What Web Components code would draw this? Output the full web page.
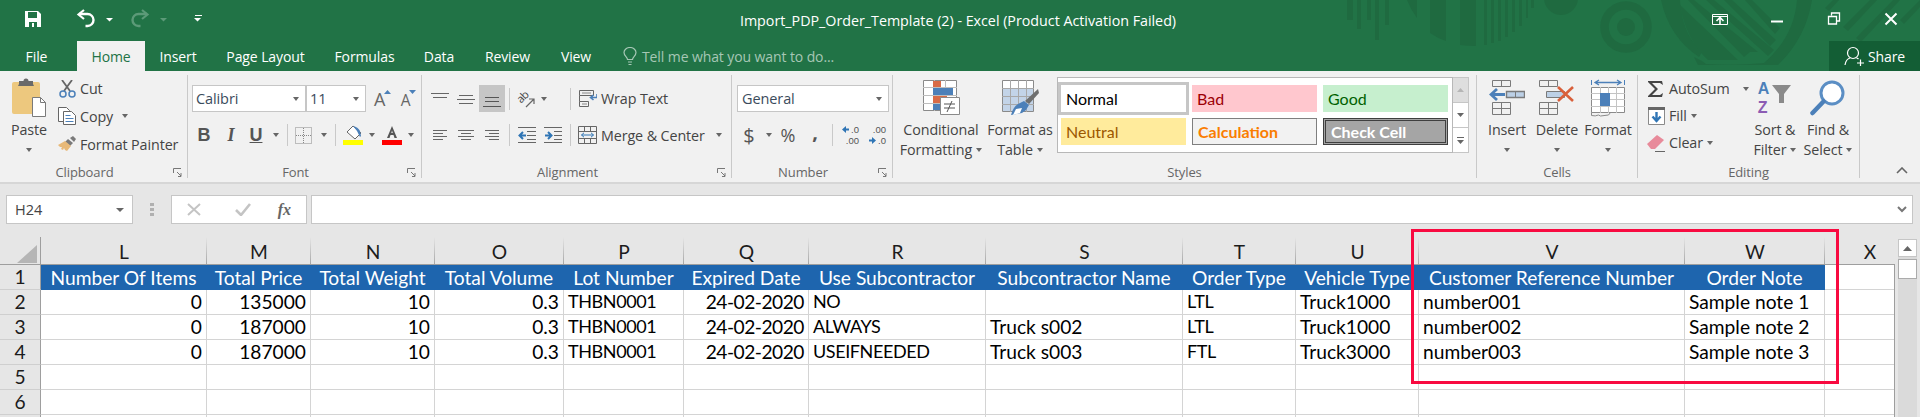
<!DOCTYPE html>
<html lang="en">
<head>
<meta charset="utf-8">
<title>Import_PDP_Order_Template (2) - Excel</title>
<style>
    html, body { margin: 0; padding: 0; height: 417px; overflow: hidden; background: #e6e6e6; }
    body { position: relative; font-family: "Open Sans", sans-serif; }
    xl-highlight { left: 1411px; top: 229px; width: 428px; height: 155px; }
</style>
</head>
<body>
<xl-titlebar></xl-titlebar>
<xl-ribbon></xl-ribbon>
<xl-formula-bar></xl-formula-bar>
<xl-sheet></xl-sheet>
<xl-highlight></xl-highlight>

<template id="xl-titlebar-template">
    <style>
        :host { display: block; position: relative; height: 71px; background: #217346; color: #fff; overflow: hidden; font-family: "Open Sans", sans-serif; }
        .art { position: absolute; left: 0; top: 0; }
        .top, .tabs { position: relative; display: flex; align-items: center; }
        .top { height: 41px; }
        .tabs { height: 30px; font-size: 14px; letter-spacing: -0.1px; }
        .tabs > div { display: flex; align-items: center; justify-content: center; height: 30px; flex: none; }
        .home { background: #f1f1f1; color: #217346; }
        .title { position: absolute; left: 0; right: 4px; top: 11px; text-align: center; font-size: 14.300px; line-height: 20px; letter-spacing: -0.02px; }
        .tell { color: #a6c7b5; }
        .share { margin-left: auto; background: #135e35; width: 91px; gap: 4px; }
        .win { position: absolute; top: 0; left: 0; }
    </style>
    <svg class="art" width="1920" height="71" fill="#1f6a40">
        <path d="M1347 0h6v20h-6zM1357 0h4v29h-4zM1367 0h4v20h-4zM1375 0h4v40h-4zM1385 0h4v25h-4z"/>
        <path d="M1407 0h10v18q-6-8-10-18zM1430 0h16v41q-9-3-16-8zM1460 0h16v46q-9 0-16-1zM1484 0h3v45h-3zM1491 0h3v43h-3zM1498 0h3v41h-3zM1505 0h3v37h-3zM1512 0h3v32h-3zM1519 0h3v26h-3zM1526 0h2v18h-2zM1531 0h3v8h-3z"/>
        <circle cx="1561" cy="-2" r="17"/>
        <circle cx="1626" cy="27" r="21.5" fill="none" stroke="#1f6a40" stroke-width="8.5"/>
        <circle cx="1626" cy="27" r="9"/>
        <path d="M1661 0h19q2 34 22 52l-3 5q-30-20-38-57zM1797 0h15q-6 38-34 65h-80l-4-8q4 2 8 4l4 3q30 2 58-1 30-26 33-63z"/>
        <path d="M1688 0h6l64 52h-8l-6 5zM1706 0h8l60 50-6 6-62-56zM1724 0h8l44 40-6 6zM1680 5l58 55h-30q-22-20-28-55zM1745 0h7l28 28-5 6z"/>
        <path d="M1825 8l8-8h6l-10 11zM1843 27l27-27h7l-29 31zM1856 38l37-38h7l-39 42zM1900 20l20-20v7l-16 17z"/>
    </svg>
    <div class="top">
        <svg class="win" width="1920" height="41" fill="none" stroke="#fff">
            <!-- quick access -->
            <path d="M25 11h13l3 3v13H25z" fill="#fff" stroke="none"/>
            <path d="M28 12h9v6h-9z" fill="#217346" stroke="none"/>
            <path d="M29 22h8v5h-8z" fill="#217346" stroke="none"/>
            <path d="M32 23h2v4h-2z" fill="#fff" stroke="none"/>
            <path d="M79 14h8.500a6 6 0 0 1 0 12h-2" stroke-width="2.400"/>
            <path d="M84 10l-5.500 4.500 5.500 4.500" stroke-width="2.200"/>
            <path d="M106 18h7l-3.500 3.500z" fill="#fff" stroke="none"/>
            <path d="M147 14h-8.500a6 6 0 0 0 0 12h2" stroke="#5c9a78" stroke-width="2.400"/>
            <path d="M142 10l5.500 4.500-5.500 4.500" stroke="#5c9a78" stroke-width="2.200"/>
            <path d="M160 18h7l-3.500 3.500z" fill="#5c9a78" stroke="none"/>
            <path d="M195 15.500h7" stroke-width="1"/>
            <path d="M194 18h7l-3.500 3.500z" fill="#fff" stroke="none"/>
            <!-- window controls -->
            <path d="M1712.500 14.500h15v10h-15z"/>
            <path d="M1712 16.500h16" />
            <path d="M1720 24v-6M1716.500 21l3.500-3.500 3.500 3.500" stroke-width="1.600"/>
            <path d="M1771 21.500h12" stroke-width="2"/>
            <path d="M1831.500 15.500v-2.500h8v8h-2.500M1828.500 16.500h8v7.500h-8z" stroke-width="1.300"/>
            <path d="M1885.500 13.500l11 11M1896.500 13.500l-11 11" stroke-width="2"/>
        </svg>
        <div class="title">Import_PDP_Order_Template (2) - Excel (Product Activation Failed)</div>
    </div>
    <div class="tabs">
        <div style="width:73px">File</div>
        <div class="home" style="width:68px;margin-left:4px">Home</div>
        <div style="width:66px">Insert</div>
        <div style="width:109px">Page Layout</div>
        <div style="width:89px">Formulas</div>
        <div style="width:60px">Data</div>
        <div style="width:77px">Review</div>
        <div style="width:60px">View</div>
        <div style="width:16px;margin-left:16px">
            <svg width="14" height="19" fill="none" stroke="#a6c7b5" stroke-width="1.200"><path d="M4.500 12.500c0-2.500-3.500-3.500-3.500-7a6 5 0 0 1 12 0c0 3.500-3.500 4.500-3.500 7zM5 15h4M5.500 17.500h3"/></svg>
        </div>
        <div class="tell" style="margin-left:4px">Tell me what you want to do...</div>
        <div class="share">
            <svg width="20" height="20" fill="none" stroke="#fff" stroke-width="1.200"><circle cx="9" cy="7" r="5.500"/><path d="M1 19q1-6 5-7M12.500 12q1.500 .5 2 1M13 17h7M16.500 13.500v7"/></svg>
            <span>Share</span>
        </div>
    </div>
</template>

<template id="xl-group-template">
    <style>
        :host { display: block; flex: none; box-sizing: border-box; height: 103px; border-right: 1px solid #c9c9c9; position: relative; }
        :host([launcher]) .label { padding-right: 18px; }
        .content { height: 87px; }
        .foot { display: grid; height: 16px; align-items: center; font-size: 13px; line-height: 16px; color: #666; padding-top: 2px; }
        .foot > * { grid-area: 1 / 1; }
        .label { text-align: center; }
        svg { justify-self: end; margin-right: 5px; }
    </style>
    <div class="content"><slot></slot></div>
    <div class="foot">
        <div class="label"></div>
    </div>
</template>

<template id="xl-ribbon-template">
    <style>
        :host { display: flex; box-sizing: border-box; height: 113px; padding-top: 4px; background: #f1f1f1; border-bottom: 2px solid #d6d6d6; color: #444; font-family: "Open Sans", sans-serif; font-size: 14.300px; letter-spacing: -0.1px; }
        .h { display: flex; align-items: flex-start; }
        .row { display: flex; align-items: center; flex: none; }
        .b { display: flex; align-items: center; justify-content: center; flex: none; }
        .sep { width: 1px; height: 22px; background: #c9c9c9; flex: none; }
        .caret { display: inline-block; width: 0; height: 0; border: 3.500px solid transparent; border-top: 4px solid #666; border-bottom: 0; vertical-align: middle; flex: none; }
        .big { display: flex; flex-direction: column; align-items: center; flex: none; line-height: 20px; }
        .big .ico { height: 45px; display: flex; align-items: center; justify-content: center; }
        .big .l { height: 20px; display: flex; align-items: center; gap: 4px; white-space: nowrap; }
        .col { display: flex; flex-direction: column; flex: none; }
        .select { box-sizing: border-box; height: 27px; background: #fff; border: 1px solid #c6c6c6; display: flex; align-items: center; justify-content: space-between; padding: 0 6px 0 3px; font-size: 14.500px; color: #3b4b5c; flex: none; }
        .gallery { display: flex; flex: none; margin: 2px 0 0 2px; }
        .swatches { box-sizing: border-box; width: 396px; height: 76px; background: #fff; border: 1px solid #b8b8b8; padding: 7px 0 0 3px; display: grid; grid-template-columns: repeat(3, 125px); grid-auto-rows: 27px; gap: 6px; font-family: Lato, sans-serif; font-size: 16px; letter-spacing: 0; }
        .swatches div { box-sizing: border-box; display: flex; align-items: center; padding-left: 5px; }
        .scroll { display: flex; flex-direction: column; width: 16px; }
        .scroll div { box-sizing: border-box; background: #fff; border: 1px solid #c6c6c6; border-left: 0; display: flex; align-items: center; justify-content: center; flex: 1; }
        .scroll div + div { border-top: 0; }
        .end { margin-left: auto; margin-right: 12px; margin-top: 92px; }
        .dec { width: 17px; display: grid; grid-template-columns: 7px 10px; grid-template-rows: 11px 11px; align-items: center; font-family: "Liberation Sans", sans-serif; font-size: 9.500px; line-height: 11px; letter-spacing: 0; flex: none; }
        .dec span { text-align: right; color: #555; }
        .dec svg { justify-self: center; }
        .az { display: flex; flex-direction: column; font-family: "Liberation Sans", sans-serif; font-weight: 700; font-size: 16px; line-height: 19px; }
    </style>

    <xl-group label="Clipboard" launcher style="width:188px">
        <div class="h">
            <div class="big" style="width:58px">
                <div class="ico"><svg width="34" height="39"><rect x="0" y="4" width="28" height="32" rx="2" fill="#edc87e"/><path d="M7 6V3h4.500a2.500 2.500 0 0 1 5 0H21v3l1 2H6z" fill="#6a6a6a"/><path d="M20.500 19.500h8l5 5v14h-13z" fill="#fff" stroke="#7a7a7a"/><path d="M28.500 19.500v5h5" fill="none" stroke="#7a7a7a"/></svg></div>
                <div class="l">Paste</div>
                <div class="l"><span class="caret"></span></div>
            </div>
            <div class="col">
                <div class="row" style="height:27px"><div class="b" style="width:18px"><svg width="17" height="18" fill="none"><path d="M3 0l8 11M13 0l-8 11" stroke="#666" stroke-width="1.800"/><circle cx="4" cy="14" r="3" stroke="#4c80b9" stroke-width="1.500"/><circle cx="13" cy="14" r="3" stroke="#4c80b9" stroke-width="1.500"/></svg></div><span style="margin-left:4px">Cut</span></div>
                <div class="row" style="height:28px"><div class="b" style="width:18px"><svg width="18" height="18" fill="#fff" stroke="#666"><path d="M.500 .500h8l3 3v11h-11z"/><path d="M5.500 4.500h8l4 4v9h-12z"/><path d="M7.500 8.500h5M7.500 11.500h8M7.500 14.500h8" stroke="#4c80b9"/></svg></div><span style="margin-left:4px">Copy</span><span class="caret" style="margin-left:9px"></span></div>
                <div class="row" style="height:28px"><div class="b" style="width:18px"><svg width="18" height="16"><path d="M10 3l5 4-3 3-5-4z" fill="#7a7a7a"/><path d="M12 2l3-2 3 3-2 3z" fill="#7a7a7a"/><path d="M7 5l6 5-4 5-2-1-1-2-1 2-2-1 1-2-2 0-2-2z" fill="#e8b978"/></svg></div><span style="margin-left:4px">Format Painter</span></div>
            </div>
        </div>
    </xl-group>

    <xl-group label="Font" launcher style="width:234px">
        <div style="padding-top:10px">
            <div class="row" style="height:27px;margin-left:4px">
                <div class="select" style="width:114px">Calibri<span class="caret"></span></div>
                <div class="select" style="width:60px">11<span class="caret"></span></div>
                <div class="b" style="width:13px;margin-left:8px;position:relative;font-size:18px;color:#666">A<svg width="7" height="4" style="margin:-14px -4px 0 -1px"><path d="M0 4l3.500-4L7 4z" fill="#4c80b9"/></svg></div>
                <div class="b" style="width:13px;margin-left:13px;font-size:15.500px;color:#666;padding-top:3px">A<svg width="7" height="4" style="margin:-17px -4px 0 -1px"><path d="M0 0h7L3.500 4z" fill="#4c80b9"/></svg></div>
            </div>
            <div class="row" style="height:26px;margin-top:10px;margin-left:4px;font-size:18px;color:#555">
                <div class="b" style="width:24px;font-weight:700;font-family:'Liberation Sans'">B</div>
                <div class="b" style="width:24px;margin-left:3px;font-style:italic;font-weight:700;font-family:'Liberation Serif'">I</div>
                <div class="b" style="width:24px;margin-left:1px;font-weight:700;font-family:'Liberation Sans';text-decoration:underline">U</div>
                <div class="b" style="width:16px"><span class="caret"></span></div>
                <div class="sep" style="margin-left:3px"></div>
                <div class="b" style="width:32px"><svg width="18" height="17" fill="none" stroke="#888" stroke-dasharray="1 1"><path d="M.500 .500h16v16h-16z"/><path d="M8.500 1v15M1 8.500h15"/></svg></div>
                <div class="b" style="width:8px"><span class="caret"></span></div>
                <div class="sep" style="margin-left:7px"></div>
                <div class="b" style="width:20px;margin-left:7px"><svg width="20" height="21"><path d="M10 1l8 7-6 6-8-7z" fill="#fff" stroke="#666"/><path d="M10 1q5 1 7 5l1 5-1 1-3-6z" fill="#4c80b9"/><rect y="15" width="20" height="5" fill="#ff0"/></svg></div>
                <div class="b" style="width:8px;margin-left:5px"><span class="caret"></span></div>
                <div class="b" style="width:20px;margin-left:6px"><svg width="20" height="21"><path d="M10 1l5 12h-2.500l-1-3h-3l-1 3H5zM9.300 8h1.500L10 5.500z" fill="#555"/><rect y="15" width="20" height="5" fill="#f00"/></svg></div>
                <div class="b" style="width:8px;margin-left:5px"><span class="caret"></span></div>
            </div>
        </div>
    </xl-group>

    <xl-group label="Alignment" launcher style="width:310px">
        <div style="padding-top:10px">
            <div class="row" style="height:27px">
                <div class="b" style="width:18px;margin-left:9px"><svg width="18" height="12" stroke="#666"><path d="M0 .500h18M2 4.500h14"/></svg></div>
                <div class="b" style="width:18px;margin-left:8px"><svg width="18" height="12" stroke="#666"><path d="M2 2.500h14M0 6.500h18M2 10.500h14"/></svg></div>
                <div class="b" style="width:26px;height:27px;margin-left:4px;background:#c6c6c6"><svg width="18" height="14" stroke="#555" style="margin-top:6px"><path d="M2 2.500h14M2 6.500h14M0 11.500h18"/></svg></div>
                <div class="sep" style="margin-left:4px"></div>
                <div class="b" style="width:19px;height:20px;margin-left:7px;position:relative"><span style="font-size:11px;line-height:11px;letter-spacing:-.5px;transform:rotate(-45deg);margin:-5px 0 0 -5px">ab</span><svg width="10" height="10" fill="none" stroke="#666" stroke-width="1.200" style="margin:8px -3px 0 -2px"><path d="M1 9l8-8M4 1h5v5"/></svg></div>
                <div class="b" style="width:8px;margin-left:4px"><span class="caret"></span></div>
                <div class="sep" style="margin-left:22px"></div>
                <div class="b" style="width:18px;margin-left:8px"><svg width="19" height="18" fill="none" stroke="#666"><path d="M.500 .500h14v5h-14zM.500 11.500h9v5h-9zM.500 5.500v6" /><path d="M3 3h9M3 14h5" stroke="#888"/><path d="M18 4v3.500h-6M14.500 5l-3 2.500 3 2.500" stroke="#4c80b9" stroke-width="1.600"/></svg></div>
                <span style="margin-left:4px">Wrap Text</span>
            </div>
            <div class="row" style="height:26px;margin-top:10px">
                <div class="b" style="width:14px;margin-left:11px"><svg width="14" height="11" stroke="#666"><path d="M0 .500h14M0 3.500h10M0 6.500h14M0 9.500h10"/></svg></div>
                <div class="b" style="width:16px;margin-left:11px"><svg width="16" height="11" stroke="#666"><path d="M0 .500h16M3 3.500h10M0 6.500h16M3 9.500h10"/></svg></div>
                <div class="b" style="width:14px;margin-left:11px"><svg width="14" height="11" stroke="#666"><path d="M0 .500h14M4 3.500h10M0 6.500h14M4 9.500h10"/></svg></div>
                <div class="sep" style="margin-left:10px"></div>
                <div class="b" style="width:18px;margin-left:8px"><svg width="18" height="16" stroke="#666" fill="none"><path d="M0 .500h18M9 4.500h9M9 8.500h9M9 12.500h9M0 15.500h18"/><path d="M8 8.500H2M5 5L1.500 8.500 5 12" stroke="#2f75b5" stroke-width="2"/></svg></div>
                <div class="b" style="width:18px;margin-left:8px"><svg width="18" height="16" stroke="#666" fill="none"><path d="M0 .500h18M10 4.500h8M10 8.500h8M10 12.500h8M0 15.500h18"/><path d="M1 8.500h6M4 5l3.500 3.500L4 12" stroke="#2f75b5" stroke-width="2"/></svg></div>
                <div class="sep" style="margin-left:8px"></div>
                <div class="b" style="width:19px;margin-left:7px"><svg width="19" height="18" fill="none" stroke="#666"><path d="M.500 .500h18v17H.500zM.500 5.500h18M.500 12.500h18M6.500 .500v5M12.500 .500v5M6.500 12.500v5M12.500 12.500v5"/><path d="M3.500 9h12M6 6.800L3.500 9 6 11.200M13 6.800L15.500 9 13 11.200" stroke="#2f75b5"/></svg></div>
                <span style="margin-left:4px;width:115px">Merge &amp; Center</span>
                <span class="caret"></span>
            </div>
        </div>
    </xl-group>

    <xl-group label="Number" launcher style="width:161px">
        <div style="padding-top:10px">
            <div class="row" style="height:27px;margin-left:5px"><div class="select" style="width:152px;padding-left:4px">General<span class="caret"></span></div></div>
            <div class="row" style="height:26px;margin-top:10px;color:#555">
                <div class="b" style="width:18px;margin-left:8px;font-size:20px">$</div>
                <div class="b" style="width:8px;margin-left:7px"><span class="caret"></span></div>
                <div class="b" style="width:24px;margin-left:3px;font-size:18px">%</div>
                <div class="b" style="width:20px;margin-left:5px;font-size:20px;font-weight:700;padding-bottom:7px">,</div>
                <div class="sep" style="margin-left:7px"></div>
                <div class="dec" style="margin-left:9px">
                    <svg width="7" height="7"><path d="M0 3.500L4 0v2.500h3v2H4V7z" fill="#2f75b5"/></svg><span>.0</span>
                    <span style="grid-column:1 / 3">.00</span>
                </div>
                <div class="dec" style="margin-left:10px">
                    <span style="grid-column:1 / 3">.00</span>
                    <svg width="7" height="7"><path d="M7 3.500L3 0v2.500H0v2h3V7z" fill="#2f75b5"/></svg><span>.0</span>
                </div>
            </div>
        </div>
    </xl-group>

    <xl-group label="Styles" style="width:584px">
        <div class="h">
            <div class="big" style="width:80px;margin-left:8px">
                <div class="ico"><svg width="37" height="35"><path d="M.500 .500h33v30H.500z" fill="#fff" stroke="#8a8a8a"/><path d="M0 7.500h34M0 15.500h34M0 23.500h34M11.500 0v31M22.500 0v31" stroke="#bdbdbd"/><path d="M10 1h8v6h-8z" fill="#d86b47"/><path d="M10 8h20v7H10z" fill="#4c80b9"/><path d="M10 16h14v7H10z" fill="#d86b47"/><path d="M10 24h8v6h-8z" fill="#4c80b9"/><path d="M17.500 17.500h19v17h-19z" fill="#fff" stroke="#8a8a8a"/><path d="M21 24h11M21 28h11M29 21l-5 11" stroke="#555" fill="none"/></svg></div>
                <div class="l">Conditional</div>
                <div class="l">Formatting<span class="caret"></span></div>
            </div>
            <div class="big" style="width:70px;margin-left:4px">
                <div class="ico"><svg width="37" height="36"><path d="M.500 .500h31v31H.500z" fill="#fff" stroke="#8a8a8a"/><path d="M1 8h30v23H1z" fill="#c3d4e8"/><path d="M0 8.500h32M0 16.500h32M0 24.500h32M8.500 0v32M16.500 0v32M24.500 0v32" stroke="#a8a8a8"/><path d="M36 9l1 4-10 11-4-3z" fill="#6f6f6f"/><path d="M22 21l5 4-3 5-4 3-11 2q2-8 7-11z" fill="#4c80b9"/><path d="M14 29l6-1-2 5-7 2z" fill="#fff"/></svg></div>
                <div class="l">Format as</div>
                <div class="l">Table<span class="caret"></span></div>
            </div>
            <div class="gallery">
                <div class="swatches">
                    <div style="outline:3px solid #c6c6c6;color:#000;background:#fff">Normal</div>
                    <div style="background:#ffc7ce;color:#9c0006">Bad</div>
                    <div style="background:#c6efce;color:#006100">Good</div>
                    <div style="background:#ffeb9c;color:#9c5700">Neutral</div>
                    <div style="background:#f2f2f2;color:#fa7d00;border:1px solid #7f7f7f;font-weight:700">Calculation</div>
                    <div style="background:#a5a5a5;color:#fff;border:3px double #3f3f3f;font-weight:700">Check Cell</div>
                </div>
                <div class="scroll">
                    <div style="background:#dedede"><svg width="7" height="4"><path d="M0 4l3.500-4L7 4z" fill="#b5b5b5"/></svg></div>
                    <div><svg width="7" height="4"><path d="M0 0h7L3.500 4z" fill="#666"/></svg></div>
                    <div><svg width="7" height="7"><path d="M0 .500h7" stroke="#666"/><path d="M0 3h7L3.500 7z" fill="#666"/></svg></div>
                </div>
            </div>
        </div>
    </xl-group>

    <xl-group label="Cells" style="width:161px">
        <div class="h">
            <div class="big" style="width:50px;margin-left:5px">
                <div class="ico"><svg width="36" height="35" fill="none" stroke="#7a7a7a"><path d="M3.500 .500h18v6h-18zM12.500 .500v6M3.500 22.500h18v12h-18zM3.500 28.500h18M12.500 22.500v12"/><path d="M17.500 11.500h18v6h-18z" fill="#bcd0e6" stroke-width="1.400"/><path d="M26.500 11.500v6"/><path d="M16 14.500H2M8 9l-6 5.500L8 20" stroke="#4c80b9" stroke-width="2.800"/></svg></div>
                <div class="l">Insert</div>
                <div class="l"><span class="caret"></span></div>
            </div>
            <div class="big" style="width:50px">
                <div class="ico"><svg width="36" height="35" fill="none" stroke="#7a7a7a"><path d="M.500 .500h18v6H.500zM9.500 .500v6M.500 22.500h18v12H.500zM.500 28.500h18M9.500 22.500v12"/><path d="M7.500 11.500h18v6h-18z" fill="#bcd0e6"/><path d="M19 7l15 14M34 7L19 21" stroke="#d9603b" stroke-width="2.600"/></svg></div>
                <div class="l">Delete</div>
                <div class="l"><span class="caret"></span></div>
            </div>
            <div class="big" style="width:50px;margin-left:1px">
                <div class="ico"><svg width="34" height="38" fill="none"><path d="M.500 1v5M33.500 1v5" stroke="#4c80b9"/><path d="M4 3.500h26M8 1L4 3.500 8 6M26 1l4 2.500L26 6" stroke="#4c80b9" stroke-width="1.300"/><path d="M.500 8.500h33v25H.500z" fill="#fff" stroke="#8a8a8a"/><path d="M0 14.500h34M0 20.500h34M0 27.500h34M9.500 8v26M17.500 8v26M25.500 8v26" stroke="#c4c4c4"/><path d="M9 14h10v13H9z" fill="#4c80b9"/><path d="M.500 33.500v3q4 1 7-.5l2 1 8-1 2-2.500" stroke="#8a8a8a"/></svg></div>
                <div class="l">Format</div>
                <div class="l"><span class="caret"></span></div>
            </div>
        </div>
    </xl-group>

    <xl-group label="Editing" style="width:222px">
        <div class="h">
            <div class="col" style="width:106px;margin-left:9px">
                <div class="row" style="height:27px"><div class="b" style="width:18px"><svg width="16" height="16"><path d="M0 0h14l1 4-3-2H4l6 6-6 6h8l3-2-1 4H0v-1l7-7-7-7z" fill="#444"/></svg></div><span style="margin-left:4px;width:74px">AutoSum</span><span class="caret"></span></div>
                <div class="row" style="height:27px"><div class="b" style="width:18px"><svg width="17" height="18"><path d="M.500 .500h16v17H.500z" fill="#fff" stroke="#8a8a8a"/><path d="M0 0h17v3H0z" fill="#666"/><path d="M8.500 5v8M4.500 9.500l4 4.500 4-4.500" fill="none" stroke="#2f75b5" stroke-width="2.400"/></svg></div><span style="margin-left:4px">Fill</span><span class="caret" style="margin-left:4px"></span></div>
                <div class="row" style="height:27px"><div class="b" style="width:18px"><svg width="19" height="18"><path d="M0 10l10-9 7 5-9 9h-4z" fill="#e88a9a"/><path d="M8 17.500h11" stroke="#666"/></svg></div><span style="margin-left:4px">Clear</span><span class="caret" style="margin-left:4px"></span></div>
            </div>
            <div class="big" style="width:44px">
                <div class="ico">
                    <div class="az"><span style="color:#4c80b9">A</span><span style="color:#8c5cb3">Z</span></div>
                    <svg width="20" height="19" style="margin:0 0 8px 3px"><path d="M0 1h19l-7 9v9H7v-9z" fill="#8a8a8a"/></svg>
                </div>
                <div class="l">Sort &amp;</div>
                <div class="l">Filter<span class="caret"></span></div>
            </div>
            <div class="big" style="width:60px;margin-left:1px">
                <div class="ico"><svg width="36" height="36" fill="none"><circle cx="22" cy="13" r="11" fill="#fff" stroke="#5b8ec4" stroke-width="3"/><path d="M13.500 21.500L2.500 33" stroke="#4c80b9" stroke-width="4.500" stroke-linecap="round"/></svg></div>
                <div class="l">Find &amp;</div>
                <div class="l">Select<span class="caret"></span></div>
            </div>
        </div>
    </xl-group>

    <svg class="end" width="12" height="7" fill="none" stroke="#666" stroke-width="1.600"><path d="M1 6l5-5 5 5"/></svg>
</template>

<template id="xl-formula-bar-template">
    <style>
        :host { display: flex; box-sizing: border-box; height: 53px; padding: 11px 7px 13px 6px; background: #e6e6e6; font-family: "Open Sans", sans-serif; color: #444; }
        .box { box-sizing: border-box; background: #fff; border: 1px solid #c6c6c6; display: flex; align-items: center; flex: none; }
        .name { width: 127px; padding: 0 8px; justify-content: space-between; font-size: 14.500px; }
        .caret { width: 0; height: 0; border: 4px solid transparent; border-top: 4px solid #666; border-bottom: 0; }
        .dots { width: 38px; flex: none; display: flex; align-items: center; justify-content: center; }
        .fx { width: 136px; margin-right: 4px; justify-content: space-between; padding: 0 15px 0 15px; }
        .input { flex: 1; justify-content: flex-end; padding-right: 5px; }
        i { font: italic 700 16px "Liberation Serif", serif; color: #666; }
    </style>
    <div class="box name">H24<span class="caret"></span></div>
    <div class="dots"><svg width="4" height="13" fill="#b0b0b0"><rect width="4" height="3"/><rect y="5" width="4" height="3"/><rect y="10" width="4" height="3"/></svg></div>
    <div class="box fx">
        <svg width="14" height="13" stroke="#c4c4c4" stroke-width="2"><path d="M1 1l12 11M13 1L1 12"/></svg>
        <svg width="16" height="13" stroke="#c4c4c4" stroke-width="2.600" fill="none" style="margin-left:8px"><path d="M1 7l5 5 9-11"/></svg>
        <i>fx</i>
    </div>
    <div class="box input"><svg width="10" height="7" fill="none" stroke="#777" stroke-width="2"><path d="M1 1l4 4 4-4"/></svg></div>
</template>

<template id="xl-sheet-template">
    <style>
        :host { display: flex; height: 180px; overflow: hidden; background: #e6e6e6; font-family: Lato, "Liberation Sans", sans-serif; font-size: 19.200px; color: #000; }
        .grid { position: relative; display: grid; grid-template-columns: 41px 166px 104px 124px 129px 120px 125px 177px 197px 113px 123px 266px 140px 90px; grid-auto-rows: 25px; grid-template-rows: 28px; flex: none; width: 1895px; overflow: hidden; }
        .grid::after { content: ""; position: absolute; right: 0; top: 27px; bottom: 0; width: 1px; background: #9e9e9e; }
        .grid > div { box-sizing: border-box; display: flex; align-items: center; background: #fff; border-right: 1px solid #d4d4d4; border-bottom: 1px solid #d4d4d4; padding: 0 4px; white-space: nowrap; overflow: hidden; min-width: 0; }
        .grid > .data { padding-bottom: 2px; }
        .grid > .corner { background: #e6e6e6; border-right: 1px solid #9e9e9e; border-bottom: 1px solid #9e9e9e; padding: 0; align-items: flex-end; }
        .grid > .ch { background: #e6e6e6 linear-gradient(#e6e6e6, #a6a6a6) no-repeat right top / 1px 100%; justify-content: center; border-right: 0; border-bottom: 1px solid #9e9e9e; padding-top: 2px; color: #1c1c1c; }
        .grid > .rh { background: #e6e6e6; justify-content: center; border-right: 1px solid #9e9e9e; border-bottom: 1px solid #cfcfcf; color: #1c1c1c; padding-bottom: 1px; }
        .grid > .head { background: #1e65ae; color: #fff; justify-content: center; border-color: #1e65ae; padding: 0; }
        .grid > .num { justify-content: flex-end; }
        .grid > .caps { font-size: 18px; letter-spacing: -0.4px; }
        .grid > .date { letter-spacing: -0.5px; }
        .bar { width: 19px; margin-left: 3px; padding-top: 2px; display: flex; flex-direction: column; flex: none; }
        .bar .up { box-sizing: border-box; height: 18px; background: #fff; border: 1px solid #c6c6c6; display: flex; align-items: center; justify-content: center; }
        .bar .track { flex: 1; background: #dadada; padding-top: 2px; }
        .bar .thumb { box-sizing: border-box; height: 20px; background: #fff; border: 1px solid #ababab; }
    </style>
    <div class="grid"></div>
    <div class="bar">
        <div class="up"><svg width="9" height="5"><path d="M0 5l4.500-5L9 5z" fill="#666"/></svg></div>
        <div class="track"><div class="thumb"></div></div>
    </div>
</template>

<template id="xl-highlight-template">
    <style>
        :host { display: block; position: absolute; box-sizing: border-box; border: 3px solid #f80a40; pointer-events: none; }
    </style>
</template>

<script>
    const launcher_svg = '<svg width="9" height="9" fill="none" stroke="#777"><path d="M.5 5V.5H8"/><path d="M4 4l4 4M8 5v3.500H5" stroke-width="1"/></svg>';

    function clone_template(host, id) {
        const template_clone = document.getElementById(id).content.cloneNode(true);
        host.attachShadow({ mode: "open" }).append(template_clone);
    }

    customElements.define("xl-titlebar", class extends HTMLElement {
        constructor() {
            super();
            clone_template(this, "xl-titlebar-template");
        }
    });

    customElements.define("xl-group", class extends HTMLElement {
        connectedCallback() {
            if (this.shadowRoot) return;
            clone_template(this, "xl-group-template");
            this.shadowRoot.querySelector(".label").textContent = this.getAttribute("label");
            if (this.hasAttribute("launcher")) {
                this.shadowRoot.querySelector(".foot").insertAdjacentHTML("beforeend", launcher_svg);
            }
        }
    });

    customElements.define("xl-ribbon", class extends HTMLElement {
        constructor() {
            super();
            clone_template(this, "xl-ribbon-template");
        }
    });

    customElements.define("xl-formula-bar", class extends HTMLElement {
        constructor() {
            super();
            clone_template(this, "xl-formula-bar-template");
        }
    });

    const columns = ["L", "M", "N", "O", "P", "Q", "R", "S", "T", "U", "V", "W", "X"];
    const headers = ["Number Of Items", "Total Price", "Total Weight", "Total Volume", "Lot Number", "Expired Date", "Use Subcontractor", "Subcontractor Name", "Order Type", "Vehicle Type", "Customer Reference Number", "Order Note", ""];
    const rows = [
        ["0", "135000", "10", "0.3", "THBN0001", "24-02-2020", "NO", "", "LTL", "Truck1000", "number001", "Sample note 1", ""],
        ["0", "187000", "10", "0.3", "THBN0001", "24-02-2020", "ALWAYS", "Truck s002", "LTL", "Truck1000", "number002", "Sample note 2", ""],
        ["0", "187000", "10", "0.3", "THBN0001", "24-02-2020", "USEIFNEEDED", "Truck s003", "FTL", "Truck3000", "number003", "Sample note 3", ""],
    ];
    const right_aligned = [0, 1, 2, 3, 5];

    function cell_class(text, i) {
        let cls = "data";
        if (text && right_aligned.includes(i)) cls += " num";
        if (/^[A-Z][A-Z0-9]+$/.test(text)) cls += " caps";
        if (/^\d+-\d+-\d+$/.test(text)) cls += " date";
        return cls;
    }

    customElements.define("xl-sheet", class extends HTMLElement {
        constructor() {
            super();
            clone_template(this, "xl-sheet-template");
            const grid = this.shadowRoot.querySelector(".grid");
            const add = (text, cls) => {
                const cell = document.createElement("div");
                cell.className = cls;
                cell.textContent = text;
                grid.append(cell);
                return cell;
            };
            add("", "corner").innerHTML = '<svg width="37" height="23"><path d="M17 22L37 4v18z" fill="#b5b5b5"/></svg>';
            columns.forEach((c) => add(c, "ch"));
            add("1", "rh");
            headers.forEach((h) => add(h, h ? "head" : ""));
            for (let r = 0; r < 6; r++) {
                // row 7 only shows its top two pixels, so it carries no number
                add(r < 5 ? String(r + 2) : "", "rh");
                columns.forEach((c, i) => {
                    const text = rows[r] ? rows[r][i] : "";
                    add(text, cell_class(text, i));
                });
            }
        }
    });

    customElements.define("xl-highlight", class extends HTMLElement {
        constructor() {
            super();
            clone_template(this, "xl-highlight-template");
        }
    });
</script>
</body>
</html>
